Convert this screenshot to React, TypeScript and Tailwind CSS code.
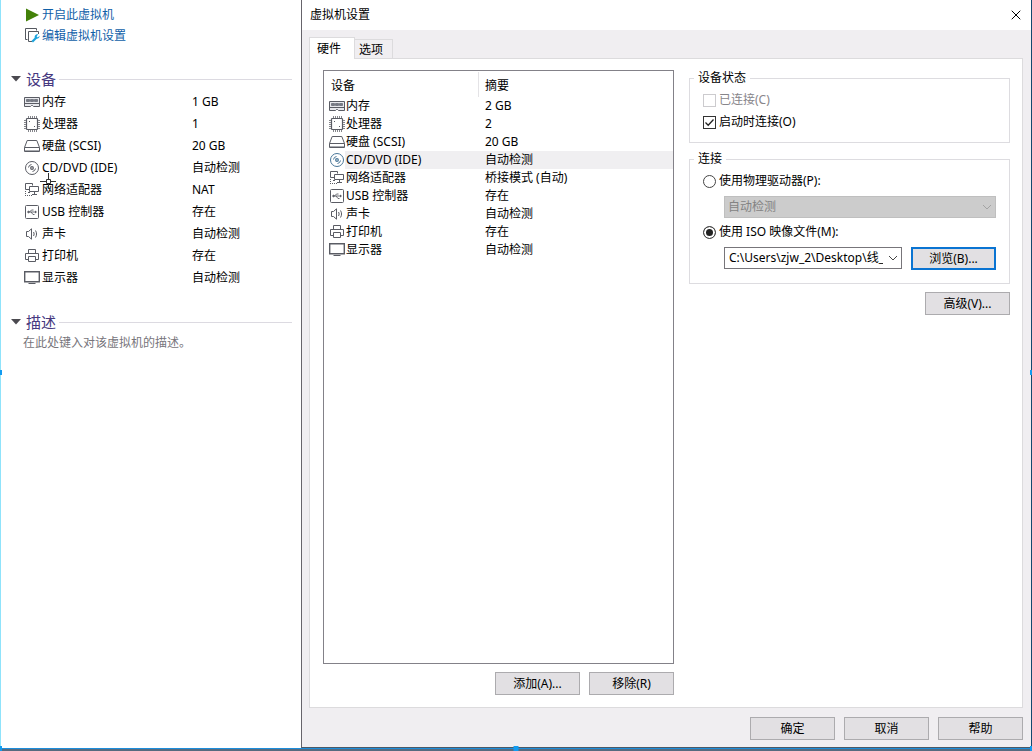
import { X } from "lucide-react";
import type { ReactNode } from "react";

type IconKind = "memory" | "cpu" | "disk" | "cd" | "network" | "usb" | "sound" | "printer" | "display";

type Device = {
  icon: IconKind;
  name: string;
  value: string;
  selected?: boolean;
};

const summaryDevices: Device[] = [
  { icon: "memory", name: "内存", value: "1 GB" },
  { icon: "cpu", name: "处理器", value: "1" },
  { icon: "disk", name: "硬盘 (SCSI)", value: "20 GB" },
  { icon: "cd", name: "CD/DVD (IDE)", value: "自动检测" },
  { icon: "network", name: "网络适配器", value: "NAT" },
  { icon: "usb", name: "USB 控制器", value: "存在" },
  { icon: "sound", name: "声卡", value: "自动检测" },
  { icon: "printer", name: "打印机", value: "存在" },
  { icon: "display", name: "显示器", value: "自动检测" },
];

const hardwareDevices: Device[] = [
  { icon: "memory", name: "内存", value: "2 GB" },
  { icon: "cpu", name: "处理器", value: "2" },
  { icon: "disk", name: "硬盘 (SCSI)", value: "20 GB" },
  { icon: "cd", name: "CD/DVD (IDE)", value: "自动检测", selected: true },
  { icon: "network", name: "网络适配器", value: "桥接模式 (自动)" },
  { icon: "usb", name: "USB 控制器", value: "存在" },
  { icon: "sound", name: "声卡", value: "自动检测" },
  { icon: "printer", name: "打印机", value: "存在" },
  { icon: "display", name: "显示器", value: "自动检测" },
];

export default function App() {
  return (
    <div className="relative flex min-h-screen flex-col overflow-hidden bg-white font-['Noto_Sans','Noto_Sans_CJK_SC',sans-serif] text-xs leading-4 text-black">
      <div className="flex flex-1 border-l border-[#8fe3fb]">
        <Summary />
        <SettingsDialog />
      </div>
      <div className="h-px bg-[#1c8ddb]" />
      <div className="h-[2px] bg-[#566b80]" />
      <Handle className="left-0 top-[370px] h-[5px] w-[2px]" />
      <Handle className="right-0 top-[370px] h-[5px] w-[2px]" />
      <Handle className="bottom-0 left-0 h-[5px] w-[2px]" />
      <Handle className="bottom-0 left-1/2 h-[5px] w-[5px] -translate-x-1/2" />
      <Handle className="bottom-0 right-0 h-[5px] w-[2px]" />
    </div>
  );
}

function Summary() {
  return (
    <aside className="relative w-[300px] shrink-0 pt-1">
      <a href="#power-on" className="flex h-[21px] items-center gap-px pl-6 text-[#1060a8]">
        <svg viewBox="0 0 16 16" className="h-4 w-4">
          <path d="M1 1.5 14 8 1 14.5Z" fill="#438109" />
        </svg>
        开启此虚拟机
      </a>
      <a href="#settings" className="flex h-[21px] items-center gap-px pl-6 text-[#1060a8]">
        <svg viewBox="0 0 16 16" className="h-4 w-4" fill="none">
          <path d="M2.500 11.500h-2v-11h11v2" stroke="#555960" />
          <path d="M7 13.500H3.500v-10h10V6" stroke="#555960" />
          <path d="m7.200 13.800 4-4" stroke="#1ba3dc" strokeWidth="2.200" />
          <path d="m14.600 7.800-1.800 1.600-1.200-1.200 1.600-1.800c-2.600-.4-4.200 1.700-3.200 3.800 1.800 1.500 4.800.3 4.600-2.400Z" fill="#1ba3dc" />
        </svg>
        编辑虚拟机设置
      </a>

      <SectionTitle>设备</SectionTitle>
      <table className="w-full table-fixed text-left">
        <tbody>
          {summaryDevices.map((device) => (
            <tr key={device.icon} className="h-[22px]">
              <td className="w-[191px] p-0 pl-[23px]">
                <div className="flex items-center gap-[2px]">
                  <DeviceIcon kind={device.icon} />
                  {device.name}
                </div>
              </td>
              <td className="p-0">{device.value}</td>
            </tr>
          ))}
        </tbody>
      </table>

      <SectionTitle>描述</SectionTitle>
      <p className="pl-[22px] pt-px text-[#77757b]">在此处键入对该虚拟机的描述。</p>

      <svg viewBox="0 0 16 16" className="absolute left-[39px] top-[173px] h-4 w-4" fill="none" stroke="#333">
        <path d="M8.500 0v6M8.500 11v5M0 8.500h6M11 8.500h5M6.500 6.500h4v4h-4z" />
      </svg>
    </aside>
  );
}

function SettingsDialog() {
  return (
    <section className="flex min-w-0 flex-1 flex-col border-b border-l border-r border-b-[#4c5966] border-l-[#66646b] border-r-[#12496f] bg-[#f0eef1]">
      <header className="flex h-[30px] items-center justify-between bg-white pl-2 pr-[7px]">
        <h1>虚拟机设置</h1>
        <button type="button" aria-label="关闭">
          <X className="h-4 w-4" strokeWidth={1.5} />
        </button>
      </header>

      <div className="flex flex-1 flex-col pl-[7px] pr-2 pt-[7px]">
        <div role="tablist" className="flex items-end">
          <button type="button" role="tab" aria-selected="true" className="relative z-10 -mb-px h-[22px] border border-b-0 border-[#dcdbdd] bg-white pl-[7px] pr-[13px]">
            硬件
          </button>
          <button type="button" role="tab" aria-selected="false" className="h-[19px] border border-b-0 border-l-0 border-[#dcdbdd] pl-1 pr-[9px] pt-px">
            选项
          </button>
        </div>

        <div role="tabpanel" className="grid flex-1 grid-cols-[351fr_321fr] gap-[15px] border border-[#dcdbdd] bg-white px-3 pb-3 pt-[11px] pl-[13px]">
          <div className="flex flex-col">
            <HardwareList />
            <div className="flex justify-end gap-[9px] pt-2">
              <DialogButton>添加(A)...</DialogButton>
              <DialogButton>移除(R)</DialogButton>
            </div>
          </div>

          <div>
            <DeviceStatus />
            <Connection />
            <div className="flex justify-end pt-2">
              <DialogButton>高级(V)...</DialogButton>
            </div>
          </div>
        </div>

        <footer className="flex justify-end gap-[9px] pb-[7px] pt-[9px]">
          <DialogButton>确定</DialogButton>
          <DialogButton>取消</DialogButton>
          <DialogButton>帮助</DialogButton>
        </footer>
      </div>
    </section>
  );
}

function HardwareList() {
  return (
    <div className="flex-1 border border-[#838188]">
      <table className="w-full table-fixed text-left">
        <thead>
          <tr className="h-[26px]">
            <th className="w-[155px] p-0 pl-[7px] font-normal">
              <div className="border-r border-[#e4e3e6] pb-[3px] pt-[6px]">设备</div>
            </th>
            <th className="p-0 pl-[6px] pt-[3px] font-normal">摘要</th>
          </tr>
        </thead>
        <tbody>
          {hardwareDevices.map((device) => (
            <tr key={device.icon} className="h-[18px]">
              <td className="p-0 pl-[5px]">
                <div className="flex items-center">
                  <DeviceIcon kind={device.icon} active={device.selected} />
                  <span className={device.selected ? "flex-1 bg-[#f0eff1] py-px pl-px" : "flex-1 py-px pl-px"}>{device.name}</span>
                </div>
              </td>
              <td className={device.selected ? "bg-[#f0eff1] p-0 pl-[6px]" : "p-0 pl-[6px]"}>{device.value}</td>
            </tr>
          ))}
        </tbody>
      </table>
    </div>
  );
}

function DeviceStatus() {
  return (
    <Group title="设备状态">
      <div className="pb-[9px] pl-[9px] pt-[3px]">
        <Checkbox label="已连接(C)" disabled />
        <Checkbox label="启动时连接(O)" defaultChecked />
      </div>
    </Group>
  );
}

function Connection() {
  return (
    <div className="pt-2">
      <Group title="连接">
        <div className="pb-[13px] pl-[9px] pr-[9px] pt-[3px]">
          <Radio label="使用物理驱动器(P):" />
          <div className="pb-[3px] pl-[21px] pt-1">
            <Select label="物理驱动器" value="自动检测" disabled />
          </div>
          <Radio label="使用 ISO 映像文件(M):" defaultChecked />
          <div className="flex gap-[9px] pl-[21px] pt-1">
            <Select label="ISO 映像文件" value="C:\Users\zjw_2\Desktop\线_" />
            <DialogButton focused>浏览(B)...</DialogButton>
          </div>
        </div>
      </Group>
    </div>
  );
}

function Group({ title, children }: { title: string; children: ReactNode }) {
  return (
    <fieldset className="min-w-0 border border-[#dddce0] px-1">
      <legend className="px-1">{title}</legend>
      {children}
    </fieldset>
  );
}

function Checkbox({ label, disabled, defaultChecked }: { label: string; disabled?: boolean; defaultChecked?: boolean }) {
  return (
    <label className={disabled ? "flex h-[22px] items-center gap-[3px] text-[#87858a]" : "flex h-[22px] items-center gap-[3px]"}>
      <span className="relative h-[13px] w-[13px]">
        <input
          type="checkbox"
          disabled={disabled}
          defaultChecked={defaultChecked}
          className="peer block h-[13px] w-[13px] appearance-none border border-[#333] bg-white disabled:border-[#cccbce]"
        />
        <svg viewBox="0 0 13 13" className="pointer-events-none absolute inset-0 hidden peer-checked:block" fill="none" stroke="#222" strokeWidth="1.300">
          <path d="m2.500 6.500 2.700 2.700 5.300-5.700" />
        </svg>
      </span>
      {label}
    </label>
  );
}

function Radio({ label, defaultChecked }: { label: string; defaultChecked?: boolean }) {
  return (
    <label className="flex h-[22px] items-center gap-[3px]">
      <input
        type="radio"
        name="connection"
        defaultChecked={defaultChecked}
        className="h-[13px] w-[13px] appearance-none rounded-full border border-[#444] bg-white checked:bg-[#222] checked:shadow-[inset_0_0_0_2px_white]"
      />
      {label}
    </label>
  );
}

function Select({ label, value, disabled }: { label: string; value: string; disabled?: boolean }) {
  return (
    <div className="relative min-w-0 flex-1">
      <select
        aria-label={label}
        disabled={disabled}
        className="block h-[22px] w-full appearance-none border border-[#77757a] bg-white pl-1 pr-[18px] disabled:border-[#bfbfbf] disabled:bg-[#cccccc] disabled:pl-[3px] disabled:text-[#838383] disabled:opacity-100"
      >
        <option>{value}</option>
      </select>
      <svg viewBox="0 0 10 10" className="pointer-events-none absolute right-1 top-[6px] h-[10px] w-[10px]" fill="none" stroke={disabled ? "#a3a3a3" : "#444"}>
        <path d="m1 3 4 4 4-4" />
      </svg>
    </div>
  );
}

function DialogButton({ children, focused }: { children: ReactNode; focused?: boolean }) {
  return (
    <button
      type="button"
      className={
        focused
          ? "h-[23px] w-[85px] border-2 border-[#0a74d2] bg-[#e2e0e3]"
          : "h-[23px] w-[85px] border border-[#acabae] bg-[#e2e0e3]"
      }
    >
      {children}
    </button>
  );
}

function SectionTitle({ children }: { children: ReactNode }) {
  return (
    <div className="flex items-center gap-[3px] pb-[2px] pl-[10px] pr-[9px] pt-[23px]">
      <svg viewBox="0 0 10 6" className="mr-[2px] h-[6px] w-[10px]">
        <path d="M0 0h10L5 5.500Z" fill="#4b4a50" />
      </svg>
      <h2 className="text-[15px] leading-5 text-[#46397f]">{children}</h2>
      <div className="h-px flex-1 bg-[#dcdae1]" />
    </div>
  );
}

function Handle({ className }: { className: string }) {
  return <div className={`absolute bg-[#129bf0] ${className}`} />;
}

function DeviceIcon({ kind, active }: { kind: IconKind; active?: boolean }) {
  return (
    <svg viewBox="0 0 16 16" className="h-4 w-4 shrink-0" fill="none" stroke={active ? "#4a7799" : "#5a5c64"}>
      {kind === "memory" && (
        <>
          <path d="M.5 3.500h15v9H9.500l-1-1h-1l-1 1h-6z" fill="#e7e8ec" />
          <path d="M1 9.500h14" />
          <path d="M2.500 5.500h3v2h-3zM6.500 5.500h3v2h-3zM10.500 5.500h3v2h-3z" fill="#777a84" stroke="#777a84" />
        </>
      )}
      {kind === "cpu" && (
        <>
          <path d="M3 2.500h10l.5.5v10l-.5.500H3l-.5-.5V3z" strokeWidth="1.200" />
          <path d="M4.500 0v2M6.500 0v2M8.500 0v2M10.500 0v2M12.500 0v2M4.500 14v2M6.500 14v2M8.500 14v2M10.500 14v2M12.500 14v2M0 4.500h2M0 6.500h2M0 8.500h2M0 10.500h2M0 12.500h2M14 4.500h2M14 6.500h2M14 8.500h2M14 10.500h2M14 12.500h2" stroke="#85868b" />
          <path d="M5 5.500h1M10 10.500h1" />
        </>
      )}
      {kind === "disk" && (
        <>
          <path d="M.5 9.500 3.200 2.500h9.600l2.700 7v4H.5zM.5 9.500h15" />
          <path d="M1 12.500h14" stroke="#a9abb0" />
        </>
      )}
      {kind === "cd" && (
        <>
          <circle cx="8" cy="8" r="6.500" />
          <circle cx="8" cy="8" r="1.300" strokeWidth="1.300" />
          <path d="M4.500 7.500A3.500 3.500 0 0 1 7.500 4.500M11.500 8.500A3.500 3.500 0 0 1 8.500 11.500" />
        </>
      )}
      {kind === "network" && (
        <>
          <path d="M5 7.500H1.500v-6h7v2M5.500 4.500h9v5h-9zM10.500 9.500v3M8 12.500h5M4 10.500h2" />
          <path d="M1.500 9v5M1 13.500h7" strokeDasharray="1 1" />
        </>
      )}
      {kind === "usb" && (
        <>
          <rect x="1.500" y="1.500" width="13" height="13" rx="1" />
          <path d="M4 8h8M5.500 8l2-2h2M7 8l2 2.500h1.500" strokeWidth=".9" />
          <circle cx="4.500" cy="8" r=".8" fill="#5a5c64" />
          <path d="m11 6.500 2 1.500-2 1.500z" fill="#5a5c64" stroke="none" />
        </>
      )}
      {kind === "sound" && (
        <>
          <path d="M2.500 5.500h2l3-2.700v10.400l-3-2.700h-2z" />
          <path d="M9.500 6c.8 1.300.8 2.700 0 4M11.500 4.500c1.400 2.300 1.400 4.700 0 7" />
        </>
      )}
      {kind === "printer" && (
        <>
          <path d="M4.500 5.500v-4h7v4M4.500 11.500h-3v-6h13v6h-3" />
          <path d="M4.500 8.500h7v5h-7z" />
        </>
      )}
      {kind === "display" && (
        <>
          <path d="M.7 1.700h14.600v10H.7z" strokeWidth="1.400" />
          <path d="M4.500 13.500h7" />
        </>
      )}
    </svg>
  );
}
